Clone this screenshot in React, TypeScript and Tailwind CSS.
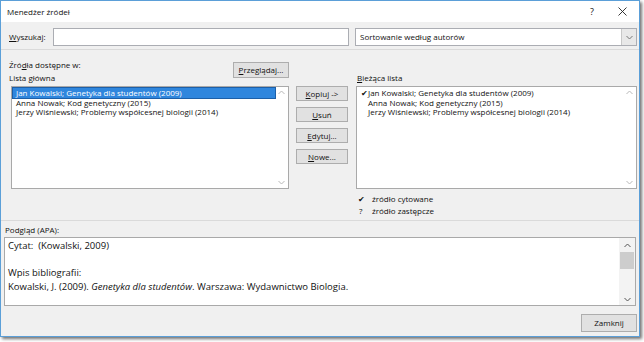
import React from 'react';

const U = ({ children }: { children: React.ReactNode }) => (
  <span className="underline underline-offset-[1px] decoration-[0.5px]">{children}</span>
);

const Chevron = ({ up, color = '#b8b8b8' }: { up?: boolean; color?: string }) => (
  <svg width="7" height="5" viewBox="0 0 7 5">
    <path d={up ? 'M0.5 4 L3.5 1 L6.5 4' : 'M0.5 1 L3.5 4 L6.5 1'} fill="none" stroke={color} strokeWidth="1" />
  </svg>
);

const Button = ({ children, className = '' }: { children: React.ReactNode; className?: string }) => (
  <div className={`flex items-center justify-center border border-[#adadad] bg-[#e1e1e1] ${className}`}>{children}</div>
);

const sources = [
  'Jan Kowalski; Genetyka dla studentów (2009)',
  'Anna Nowak; Kod genetyczny (2015)',
  'Jerzy Wiśniewski; Problemy współcesnej biologii (2014)',
];

function ListBox({ withCheck, selected }: { withCheck?: boolean; selected?: number }) {
  return (
    <div className="flex h-[103px] border border-[#a9a9a9] bg-white">
      <div className="flex-1 pt-[1px] pl-[1px] leading-[9.5px]">
        {sources.map((s, i) => (
          <div
            key={s}
            className={`flex h-[9.5px] items-center ${
              selected === i ? 'bg-[#2f86dd] text-white outline outline-[0.5px] outline-[#1c5fa8]' : ''
            }`}
          >
            {withCheck ? (
              <span className="w-[10px] pl-[3px] text-[8px]">{i === 0 ? '✔' : ''}</span>
            ) : (
              <span className="w-[3px]" />
            )}
            <span>{s}</span>
          </div>
        ))}
      </div>
      <div className="flex w-[13px] flex-col items-center justify-between pt-[3px] pb-[3px]">
        <Chevron up />
        <Chevron />
      </div>
    </div>
  );
}

export default function App() {
  return (
    <div className="h-[342px] w-[644px] overflow-hidden bg-white font-['Open_Sans',sans-serif] text-[8px] text-[#111]">
      <div className="flex h-[337px] w-[640px] flex-col border border-[#5b9fd8] shadow-[2px_2px_3px_rgba(0,0,0,0.55)]">
        {/* title bar */}
        <div className="flex h-[21px] items-center bg-white pl-[6px] text-[8px]">
          <span>Menedżer źródeł</span>
          <span className="ml-auto mr-[24px] text-[9px]">?</span>
          <svg width="9" height="9" viewBox="0 0 9 9" className="mr-[12px]">
            <path d="M0.5 0.5 L8.5 8.5 M8.5 0.5 L0.5 8.5" stroke="#222" strokeWidth="0.9" />
          </svg>
        </div>

        <div className="flex flex-1 flex-col bg-[#f0f0f0]">
          {/* search row */}
          <div className="mt-[6px] flex h-[18px] items-center pl-[8px] pr-[1px]">
            <span className="w-[44px]">
              <U>W</U>yszukaj:
            </span>
            <div className="h-full w-[296px] border border-[#abadb3] bg-white" />
            <div className="ml-[6px] flex h-full w-[282px] border border-[#abadb3] bg-white">
              <span className="flex flex-1 items-center pl-[4px]">Sortowanie według autorów</span>
              <div className="flex w-[15px] items-center justify-center border-l border-[#c8c8c8] bg-[#e8e8e8]">
                <Chevron color="#777" />
              </div>
            </div>
          </div>

          <div className="mt-[3px] h-px bg-[#dadada]" />

          {/* sources */}
          <div className="flex pl-[8px]">
            <div className="w-[280px]">
              <div className="flex h-[36px] justify-between">
                <div className="pt-[8px] leading-[13px]">
                  <div>
                    Źró<U>d</U>ła dostępne w:
                  </div>
                  <div>Lista główna</div>
                </div>
                <div className="pt-[12px]">
                  <Button className="h-[16px] w-[56px]">
                    <span>
                      <U>P</U>rzeglądaj...
                    </span>
                  </Button>
                </div>
              </div>
              <div className="ml-[2px]">
                <ListBox selected={0} />
              </div>
            </div>

            <div className="ml-[7px] flex w-[52px] flex-col gap-[6px] pt-[36px]">
              <Button className="h-[15px]">
                <span>
                  <U>K</U>opiuj -&gt;
                </span>
              </Button>
              <Button className="h-[15px]">
                <span>
                  <U>U</U>suń
                </span>
              </Button>
              <Button className="h-[15px]">
                <span>
                  <U>E</U>dytuj...
                </span>
              </Button>
              <Button className="h-[15px]">
                <span>
                  <U>N</U>owe...
                </span>
              </Button>
            </div>

            <div className="ml-[8px] w-[281px]">
              <div className="h-[36px] pt-[21px] pl-[1px] leading-[13px]">
                <U>B</U>ieżąca lista
              </div>
              <ListBox withCheck />
              <div className="mt-[4px] pl-[2px] leading-[12px]">
                <div className="flex">
                  <span className="w-[14px] text-[7.5px]">✔</span>
                  <span>źródło cytowane</span>
                </div>
                <div className="flex">
                  <span className="w-[14px] pl-[1px]">?</span>
                  <span>źródło zastępcze</span>
                </div>
              </div>
            </div>
          </div>

          <div className="mt-[3px] h-px bg-[#dadada]" />

          {/* preview */}
          <div className="mt-[3px] pl-[4px] leading-[12px]">Podgląd (APA):</div>
          <div className="ml-[3px] mt-[1px] flex h-[69px] w-[632px] border border-[#a9a9a9] bg-white">
            <div className="flex-1 pl-[3px] pt-[1px] text-[9.5px] leading-[13.5px] text-[#111]">
              <div>Cytat:&nbsp; (Kowalski, 2009)</div>
              <div>&nbsp;</div>
              <div>Wpis bibliografii:</div>
              <div>
                Kowalski, J. (2009). <i>Genetyka dla studentów</i>. Warszawa: Wydawnictwo Biologia.
              </div>
            </div>
            <div className="flex w-[16px] flex-col items-center bg-[#f3f3f3] pb-[3px] pt-[5px]">
              <Chevron up color="#555" />
              <div className="mt-[4px] h-[17px] w-[14px] bg-[#cdcdcd]" />
              <div className="flex-1" />
              <Chevron color="#555" />
            </div>
          </div>

          <div className="mt-[8px] flex justify-end pr-[2px]">
            <Button className="h-[18px] w-[56px]">Zamknij</Button>
          </div>
        </div>
      </div>
    </div>
  );
}
